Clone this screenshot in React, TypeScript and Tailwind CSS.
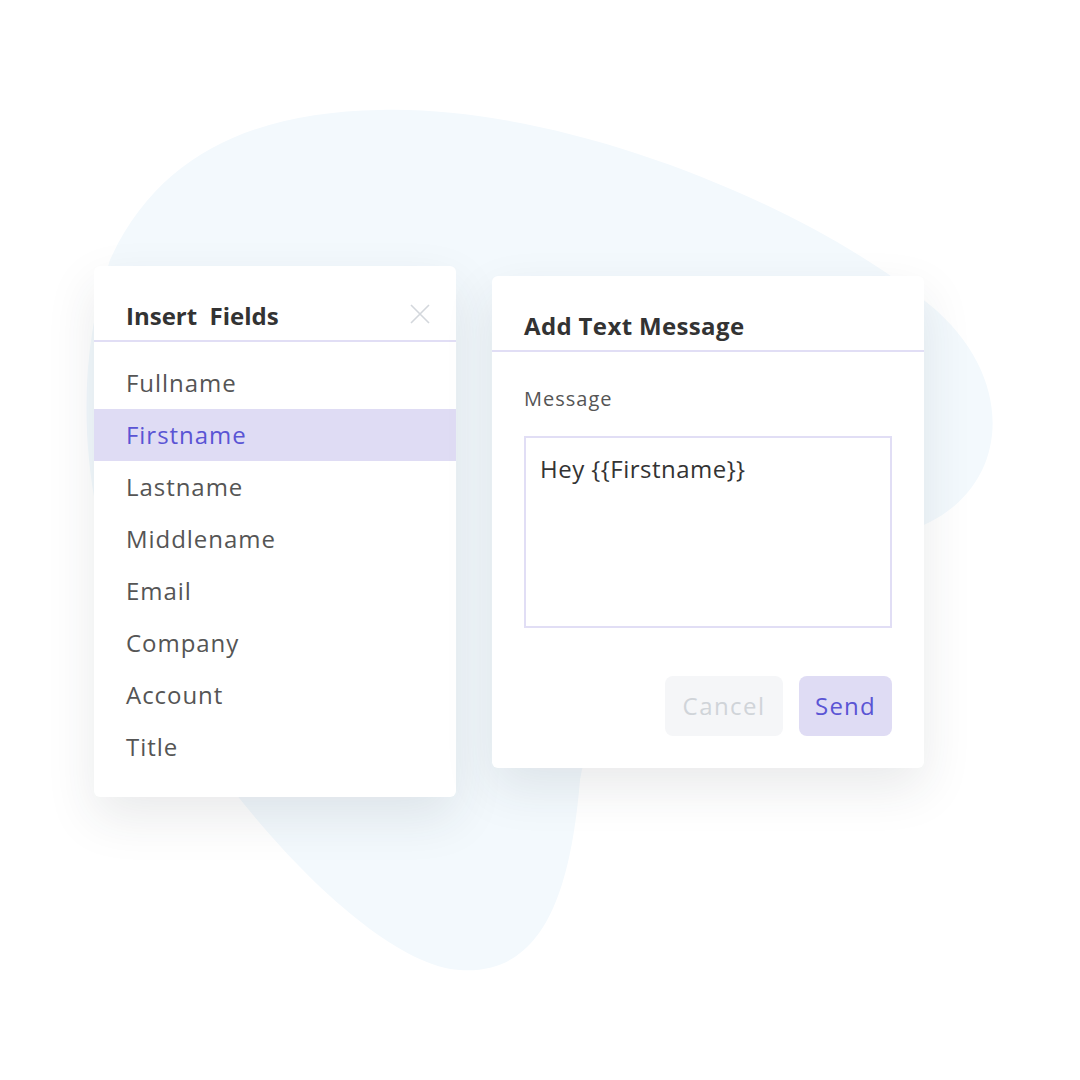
const FIELDS = [
  "Fullname",
  "Firstname",
  "Lastname",
  "Middlename",
  "Email",
  "Company",
  "Account",
  "Title",
];

const FONT = { fontFamily: '"Open Sans", "Noto Sans", sans-serif' };

export default function App() {
  return (
    <div
      className="relative h-[1080px] w-[1080px] overflow-hidden bg-white"
      style={FONT}
    >
      {/* Background blob */}
      <svg
        className="absolute left-0 top-0"
        width="1080"
        height="1080"
        viewBox="0 0 1080 1080"
      >
        <path
          d="M 380 110 C 560 105, 800 200, 930 305 C 1015 375, 1012 480, 930 522 C 800 585, 600 650, 580 780 C 570 900, 540 975, 460 970 C 380 965, 250 830, 170 700 C 90 570, 62 400, 110 260 C 160 150, 260 112, 380 110 Z"
          fill="#f3f9fd"
        />
      </svg>

      <div className="relative flex items-start gap-[36px] pl-[94px] pt-[266px]">
        {/* Insert fields panel */}
        <div className="w-[362px] rounded-md bg-white pb-[24px] shadow-[0_20px_50px_rgba(40,50,60,0.10)]">
          <div className="flex h-[76px] items-start justify-between border-b-2 border-[#e1def5] pl-[32px] pr-[26px] pt-[34px]">
            <h2 className="whitespace-pre text-[24px] font-bold leading-[32px] text-[#333]">
              {"Insert  Fields"}
            </h2>
            <svg width="20" height="20" viewBox="0 0 20 20" className="mt-[4px]">
              <path
                d="M1 1 L19 19 M19 1 L1 19"
                stroke="#d3d7dc"
                strokeWidth="1.6"
                fill="none"
              />
            </svg>
          </div>
          <ul className="pt-[15px]">
            {FIELDS.map((f) => (
              <li
                key={f}
                className={
                  f === "Firstname"
                    ? "flex h-[52px] items-center bg-[#dfdcf4] pl-[32px] text-[24px] tracking-[0.04em] text-[#5a54d4]"
                    : "flex h-[52px] items-center pl-[32px] text-[24px] tracking-[0.04em] text-[#555]"
                }
              >
                {f}
              </li>
            ))}
          </ul>
        </div>

        {/* Add text message panel */}
        <div className="mt-[10px] w-[432px] rounded-md bg-white pb-[32px] shadow-[0_20px_50px_rgba(40,50,60,0.10)]">
          <div className="h-[76px] border-b-2 border-[#e1def5] pl-[32px] pt-[34px]">
            <h2 className="text-[24px] font-bold leading-[32px] tracking-[0.015em] text-[#333]">
              Add Text Message
            </h2>
          </div>
          <div className="px-[32px] pt-[33px]">
            <label className="block text-[20px] leading-[28px] tracking-[0.05em] text-[#555]">
              Message
            </label>
            <div className="mt-[23px] h-[192px] border-2 border-[#e1def5] px-[14px] pt-[15px] text-[24px] leading-[32px] tracking-[0.02em] text-[#333]">
              {"Hey {{Firstname}}"}
            </div>
            <div className="mt-[48px] flex justify-end gap-[16px]">
              <button className="h-[60px] w-[118px] rounded-lg bg-[#f5f6f8] text-[24px] tracking-[0.06em] text-[#d0d4d9]">
                Cancel
              </button>
              <button className="h-[60px] w-[93px] rounded-lg bg-[#dfdcf4] text-[24px] tracking-[0.05em] text-[#5a54d4]">
                Send
              </button>
            </div>
          </div>
        </div>
      </div>
    </div>
  );
}
